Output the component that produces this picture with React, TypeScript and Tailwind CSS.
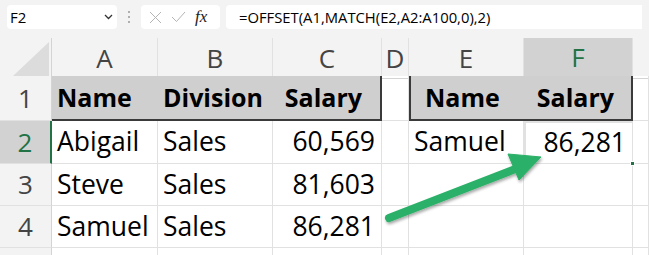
import React from "react";

const COLS = "grid grid-cols-[52px_106px_115px_109px_27px_115px_109px_1fr]";
const FONT = { fontFamily: '"Open Sans", "Liberation Sans", sans-serif' };

function ColHeader({ label, selected }: { label: string; selected?: boolean }) {
  return (
    <div
      className={`flex items-center justify-center border-r border-[#e1e1e1] text-[26px] ${
        selected ? "border-b-2 border-b-[#217346] bg-[#d2d2d2] text-[#217346]" : "border-b border-b-[#d4d4d4] text-[#444]"
      }`}
    >
      {label}
    </div>
  );
}

function RowHeader({ n, selected }: { n?: number; selected?: boolean }) {
  return (
    <div
      className={`flex items-center justify-center border-b border-[#e1e1e1] text-[26px] ${
        selected ? "border-r-2 border-r-[#217346] bg-[#d2d2d2] text-[#217346]" : "border-r border-r-[#d4d4d4] bg-[#f3f3f3] text-[#444]"
      }`}
    >
      {n}
    </div>
  );
}

function Cell({ children, right, className = "" }: { children?: React.ReactNode; right?: boolean; className?: string }) {
  return (
    <div
      className={`flex items-center border-b border-r border-[#e1e1e1] text-[26.5px] text-black ${
        right ? "justify-end pr-[6px]" : "pl-[5px]"
      } ${className}`}
    >
      {children}
    </div>
  );
}

function Head({ children, className = "" }: { children: React.ReactNode; className?: string }) {
  return (
    <div
      className={`flex items-center border-b-2 border-b-[#3a3a3a] bg-[#d0cfcf] text-[25px] font-bold text-black ${className}`}
    >
      {children}
    </div>
  );
}

export default function App() {
  const rows = [
    ["Abigail", "Sales", "60,569"],
    ["Steve", "Sales", "81,603"],
    ["Samuel", "Sales", "86,281"],
  ];
  return (
    <div className="relative h-[255px] w-[649px] overflow-hidden bg-white" style={FONT}>
      {/* formula bar */}
      <div className="flex h-[38px] items-start gap-[6px] bg-[#f3f3f3] px-[7px] pt-[5px]">
        <div className="flex h-[24px] w-[110px] items-center justify-between rounded-[4px] bg-white pl-[3px] pr-[4px] text-[15px] text-black">
          <span>F2</span>
          <svg width="9" height="6" viewBox="0 0 9 6">
            <path d="M1 1l3.5 3.5L8 1" fill="none" stroke="#333" strokeWidth="1.3" />
          </svg>
        </div>
        <div className="flex h-[24px] w-[12px] flex-col items-center justify-center gap-[3px]">
          <span className="h-[2px] w-[2px] rounded-full bg-[#999]" />
          <span className="h-[2px] w-[2px] rounded-full bg-[#999]" />
          <span className="h-[2px] w-[2px] rounded-full bg-[#999]" />
        </div>
        <div className="flex h-[24px] w-[79px] items-center gap-[9px] rounded-[4px] bg-white pl-[8px]">
          <svg width="13" height="13" viewBox="0 0 13 13">
            <path d="M1 1l11 11M12 1L1 12" stroke="#b4b4b4" strokeWidth="1" />
          </svg>
          <svg width="15" height="12" viewBox="0 0 15 12">
            <path d="M1 6l4.5 4.5L14 1" fill="none" stroke="#b4b4b4" strokeWidth="1" />
          </svg>
          <span className="text-[17px] italic text-[#222]" style={{ fontFamily: '"Liberation Serif", serif' }}>
            fx
          </span>
        </div>
        <div className="flex h-[24px] flex-1 items-center rounded-l-[4px] bg-white pl-[13px] text-[14.8px] text-black">
          =OFFSET(A1,MATCH(E2,A2:A100,0),2)
        </div>
      </div>

      {/* column headers */}
      <div className={`${COLS} h-[38px] bg-[#f3f3f3]`}>
        <div className="flex items-end justify-end border-b border-r border-[#d4d4d4] p-[2px]">
          <svg width="36" height="34" viewBox="0 0 36 34">
            <path d="M36 0V34H0Z" fill="#dcdcdc" />
          </svg>
        </div>
        <ColHeader label="A" />
        <ColHeader label="B" />
        <ColHeader label="C" />
        <ColHeader label="D" />
        <ColHeader label="E" />
        <ColHeader label="F" selected />
        <div className="border-b border-[#d4d4d4]" />
      </div>

      {/* row 1 */}
      <div className={`${COLS} h-[45px]`}>
        <RowHeader n={1} />
        <Head className="pl-[5px]">Name</Head>
        <Head className="pl-[5px]">Division</Head>
        <Head className="justify-end border-r-2 border-r-[#3a3a3a] pr-[18px]">Salary</Head>
        <Cell />
        <Head className="border-l-2 border-l-[#3a3a3a] pl-[14px]">Name</Head>
        <Head className="justify-end border-r-2 border-r-[#3a3a3a] pr-[17px]">Salary</Head>
        <Cell />
      </div>

      {rows.map((r, i) => (
        <div key={i} className={`${COLS} ${i === 0 ? "h-[43px]" : "h-[42px]"}`}>
          <RowHeader n={i + 2} selected={i === 0} />
          <Cell>{r[0]}</Cell>
          <Cell>{r[1]}</Cell>
          <Cell right>{r[2]}</Cell>
          <Cell />
          {i === 0 ? <Cell>Samuel</Cell> : <Cell />}
          {i === 0 ? (
            <Cell right className="relative border-2 border-[#217346]">
              86,281
              <span className="absolute -bottom-[3px] -right-[3px] h-[5px] w-[5px] border border-white bg-[#217346]" />
            </Cell>
          ) : (
            <Cell />
          )}
          <Cell />
        </div>
      ))}

      <div className={`${COLS} h-[20px]`}>
        <RowHeader />
        <Cell />
        <Cell />
        <Cell />
        <Cell />
        <Cell />
        <Cell />
        <Cell />
      </div>

      {/* arrow */}
      <svg className="pointer-events-none absolute left-0 top-0" width="649" height="255" viewBox="0 0 649 255">
        <defs>
          <filter id="sh" x="-20%" y="-20%" width="140%" height="140%">
            <feDropShadow dx="1" dy="2" stdDeviation="1.5" floodColor="#000" floodOpacity="0.35" />
          </filter>
        </defs>
        <g filter="url(#sh)" fill="#2bb067" stroke="#2bb067">
          <line x1="389" y1="218" x2="518" y2="168" strokeWidth="8" strokeLinecap="round" />
          <path d="M508 154L541 157L519 180Z" strokeWidth="1" strokeLinejoin="round" />
        </g>
      </svg>
    </div>
  );
}
